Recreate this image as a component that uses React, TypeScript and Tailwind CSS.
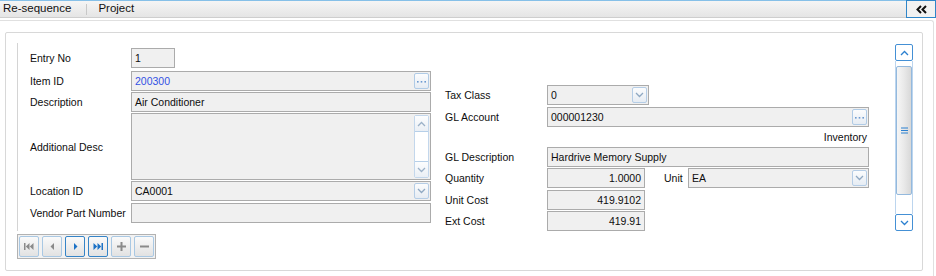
import React from "react";

const Chevron = ({ dir, color }: { dir: "up" | "down"; color: string }) => (
  <svg width="9" height="6" viewBox="0 0 9 6">
    {dir === "up" ? (
      <path d="M1 5 L4.5 1.5 L8 5" fill="none" stroke={color} strokeWidth="1.3" />
    ) : (
      <path d="M1 1 L4.5 4.5 L8 1" fill="none" stroke={color} strokeWidth="1.3" />
    )}
  </svg>
);

const ComboBtn = () => (
  <div className="w-[15px] h-[16px] mr-[1px] border border-[#b5cde6] rounded-[2px] bg-gradient-to-b from-[#fbfcfd] to-[#e6ecf3] flex items-center justify-center">
    <Chevron dir="down" color="#8fa8c2" />
  </div>
);

const EllipsisBtn = () => (
  <div className="w-[15px] h-[16px] mr-[1px] border border-[#b0cbe6] rounded-[2px] bg-gradient-to-b from-[#fbfcfd] to-[#e6ecf3] flex items-center justify-center">
    <svg width="11" height="3" viewBox="0 0 11 3">
      <rect x="1" y="1" width="1.6" height="1.6" fill="#6d9ad0" />
      <rect x="4.7" y="1" width="1.6" height="1.6" fill="#6d9ad0" />
      <rect x="8.4" y="1" width="1.6" height="1.6" fill="#6d9ad0" />
    </svg>
  </div>
);

const box = "h-[20px] border border-[#ababab] bg-[#f0f0f0] flex items-center";

const Label = ({ children, w }: { children: React.ReactNode; w: string }) => (
  <div className={`${w} shrink-0 h-[20px] pt-[2px] flex items-center whitespace-nowrap`}>{children}</div>
);

const T = ({ children, className = "" }: { children?: React.ReactNode; className?: string }) => (
  <span className={`pt-[1px] ${className}`}>{children}</span>
);

function NavBtn({ active, children }: { active?: boolean; children: React.ReactNode }) {
  return (
    <div
      className={`w-[20px] h-[21px] rounded-[2px] border ${
        active ? "border-[#3584c7]" : "border-[#a9c8e3]"
      } bg-gradient-to-b from-[#fafafa] to-[#e2e2e2] flex items-center justify-center`}
    >
      {children}
    </div>
  );
}

export default function App() {
  const gray = "#8a8a8a";
  const blue = "#1c72c6";
  return (
    <div className="w-[936px] h-[276px] bg-white overflow-hidden font-['Liberation_Sans',Arial,sans-serif] text-[10.5px] text-[#0e0e0e] flex flex-col">
      {/* toolbar */}
      <div className="h-[18px] shrink-0 flex">
        <div className="flex-1 border-t border-t-[#86c0e8] border-b border-b-[#cecece] bg-gradient-to-b from-[#f5f5f5] to-[#e5e5e5] flex items-center text-[11.5px] text-[#111]">
          <span className="pl-[3px]">Re-sequence</span>
          <span className="ml-[15px] mr-[11px] w-[1px] h-[11px] bg-[#c8c8c8]" />
          <span>Project</span>
        </div>
        <div className="w-[30px] border border-[#2f86c9] bg-[#f2f2f2] flex items-center justify-center">
          <svg width="11" height="9" viewBox="0 0 11 9">
            <path d="M5 1 L1.5 4.5 L5 8 M10 1 L6.5 4.5 L10 8" fill="none" stroke="#111" strokeWidth="2" />
          </svg>
        </div>
      </div>

      {/* body */}
      <div className="mt-[2px] w-[934px] flex-1 border-t border-r border-[#e0e0e0] rounded-tr-[3px]">
        <div className="mt-[11px] ml-[5px] w-[918px] h-[239px] border border-[#d8d8d8] rounded-[2px] bg-white flex flex-col">
          {/* form area */}
          <div className="mt-[10px] ml-[11px] mr-[9px] h-[188px] border-l border-[#d4d4d4] flex">
            {/* left column */}
            <div className="pl-[12px] pt-[5px] flex flex-col">
              <div className="flex">
                <Label w="w-[101px]">Entry No</Label>
                <div className={`${box} w-[44px] px-[3px]`}><T>1</T></div>
              </div>
              <div className="flex mt-[3px]">
                <Label w="w-[101px]">Item ID</Label>
                <div className={`${box} w-[300px] pl-[3px] justify-between`}>
                  <T className="text-[#3252e4]">200300</T>
                  <EllipsisBtn />
                </div>
              </div>
              <div className="flex mt-[1px]">
                <Label w="w-[101px]">Description</Label>
                <div className={`${box} w-[300px] px-[3px]`}><T>Air Conditioner</T></div>
              </div>
              <div className="flex mt-[1px] items-center">
                <Label w="w-[101px]">Additional Desc</Label>
                <div className="w-[300px] h-[67px] border border-[#ababab] bg-[#f0f0f0] flex justify-end py-[1px] pr-[1px]">
                  <div className="w-[15px] flex flex-col border border-[#c3d7ec] rounded-[2px] bg-white">
                    <div className="h-[16px] border-b border-[#b6cfe8] bg-gradient-to-b from-[#fcfdfe] to-[#eaeff5] flex items-center justify-center">
                      <Chevron dir="up" color="#9bb1c8" />
                    </div>
                    <div className="flex-1" />
                    <div className="h-[16px] border-t border-[#b6cfe8] bg-gradient-to-b from-[#fcfdfe] to-[#eaeff5] flex items-center justify-center">
                      <Chevron dir="down" color="#9bb1c8" />
                    </div>
                  </div>
                </div>
              </div>
              <div className="flex mt-[1px]">
                <Label w="w-[101px]">Location ID</Label>
                <div className={`${box} w-[300px] pl-[3px] justify-between`}>
                  <T>CA0001</T>
                  <ComboBtn />
                </div>
              </div>
              <div className="flex mt-[2px]">
                <Label w="w-[101px]">Vendor Part Number</Label>
                <div className={`${box} w-[300px]`} />
              </div>
            </div>

            {/* right column */}
            <div className="ml-[14px] pt-[42px] flex flex-col">
              <div className="flex">
                <Label w="w-[102px]">Tax Class</Label>
                <div className={`${box} w-[102px] pl-[3px] justify-between`}>
                  <T>0</T>
                  <ComboBtn />
                </div>
              </div>
              <div className="flex mt-[2px]">
                <Label w="w-[102px]">GL Account</Label>
                <div className={`${box} w-[322px] pl-[3px] justify-between`}>
                  <T>000001230</T>
                  <EllipsisBtn />
                </div>
              </div>
              <div className="h-[20px] pt-[3px] pr-[2px] text-right leading-[14px]">Inventory</div>
              <div className="flex">
                <Label w="w-[102px]">GL Description</Label>
                <div className={`${box} w-[322px] px-[3px]`}><T>Hardrive Memory Supply</T></div>
              </div>
              <div className="flex mt-[1px]">
                <Label w="w-[102px]">Quantity</Label>
                <div className={`${box} w-[98px] pr-[3px] justify-end`}><T>1.0000</T></div>
                <div className="w-[24px] ml-[19px] h-[20px] pt-[2px] flex items-center">Unit</div>
                <div className={`${box} w-[181px] pl-[3px] justify-between`}>
                  <T>EA</T>
                  <ComboBtn />
                </div>
              </div>
              <div className="flex mt-[2px]">
                <Label w="w-[102px]">Unit Cost</Label>
                <div className={`${box} w-[98px] pr-[3px] justify-end`}><T>419.9102</T></div>
              </div>
              <div className="flex mt-[1px]">
                <Label w="w-[102px]">Ext Cost</Label>
                <div className={`${box} w-[98px] pr-[3px] justify-end`}><T>419.91</T></div>
              </div>
            </div>

            <div className="flex-1" />

            {/* vertical scrollbar */}
            <div className="mt-[1px] w-[18px] h-[187px] flex flex-col">
              <div className="h-[17px] border border-[#4490d5] rounded-[2px] bg-white flex items-center justify-center">
                <Chevron dir="up" color="#2b80d0" />
              </div>
              <div className="flex-1 border-x border-[#bcd5ee] bg-white flex flex-col">
                <div className="mt-[5px] h-[129px] border border-[#94b9dd] rounded-[2px] bg-gradient-to-r from-[#f6f6f6] via-[#e9e9e9] to-[#d8d8d8] flex items-center justify-center">
                  <svg width="7" height="7" viewBox="0 0 7 7">
                    <path d="M0 1 H7 M0 3.5 H7 M0 6 H7" stroke="#2b80d0" strokeWidth="1" />
                  </svg>
                </div>
              </div>
              <div className="h-[17px] border border-[#4490d5] rounded-[2px] bg-white flex items-center justify-center">
                <Chevron dir="down" color="#2b80d0" />
              </div>
            </div>
          </div>

          {/* nav bar */}
          <div className="mt-[3px] ml-[11px] w-[139px] h-[25px] border border-[#b2b2b2] bg-[#f2f2f2] p-[1px] flex gap-[3px]">
            <NavBtn>
              <svg width="10" height="7" viewBox="0 0 10 7">
                <rect x="0" y="0" width="1.5" height="7" fill={gray} />
                <path d="M5.5 0 L1.8 3.5 L5.5 7 Z M9.5 0 L5.8 3.5 L9.5 7 Z" fill={gray} />
              </svg>
            </NavBtn>
            <NavBtn>
              <svg width="5" height="7" viewBox="0 0 5 7">
                <path d="M4 0 L0.5 3.5 L4 7 Z" fill={gray} />
              </svg>
            </NavBtn>
            <NavBtn active>
              <svg width="5" height="7" viewBox="0 0 5 7">
                <path d="M1 0 L4.5 3.5 L1 7 Z" fill={blue} />
              </svg>
            </NavBtn>
            <NavBtn active>
              <svg width="10" height="7" viewBox="0 0 10 7">
                <path d="M0.5 0 L4.2 3.5 L0.5 7 Z M4.5 0 L8.2 3.5 L4.5 7 Z" fill={blue} />
                <rect x="8.5" y="0" width="1.5" height="7" fill={blue} />
              </svg>
            </NavBtn>
            <NavBtn>
              <svg width="9" height="9" viewBox="0 0 9 9">
                <path d="M0 4.5 H9 M4.5 0 V9" stroke={gray} strokeWidth="2" />
              </svg>
            </NavBtn>
            <NavBtn>
              <svg width="9" height="9" viewBox="0 0 9 9">
                <path d="M0 4.5 H9" stroke={gray} strokeWidth="2" />
              </svg>
            </NavBtn>
          </div>
        </div>
      </div>
    </div>
  );
}
